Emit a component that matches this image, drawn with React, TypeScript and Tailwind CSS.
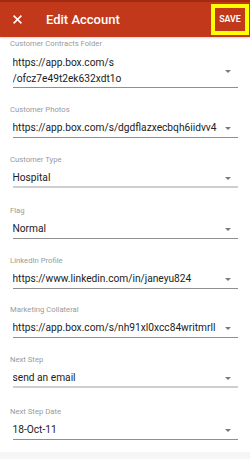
import React from 'react';

type Field = {
  label: string;
  lines: string[];
  soft?: boolean;
  top?: string;
};

const fields: Field[] = [
  { label: 'Customer Photos', lines: ['https://app.box.com/s/dgdflazxecbqh6iidvv4'] },
  { label: 'Customer Type', lines: ['Hospital'], soft: true },
  { label: 'Flag', lines: ['Normal'], top: 'pt-[18px]' },
  { label: 'LinkedIn Profile', lines: ['https://www.linkedin.com/in/janeyu824'] },
  { label: 'Marketing Collateral', lines: ['https://app.box.com/s/nh91xl0xcc84writmrll'], top: 'pt-[16px]' },
  { label: 'Next Step', lines: ['send an email'], soft: true },
  { label: 'Next Step Date', lines: ['18-Oct-11'], top: 'pt-[19px]' },
];

const Caret = () => (
  <svg width="6" height="3" viewBox="0 0 6 3" className="shrink-0">
    <path d="M0 0 L6 0 L3 3 Z" fill="#7a7a7a" />
  </svg>
);

const FormField = ({ field, first }: { field: Field; first?: boolean }) => (
  <div className={first ? 'pt-[2px]' : field.top ?? 'pt-[17px]'}>
    <div className="ml-[10px] h-[10px] text-[7.7px] leading-[10px] text-[#9a9a9a]">{field.label}</div>
    <div className={`ml-[12.5px] w-[225px] ${first ? 'mt-[6px]' : 'mt-[5px]'}`}>
      <div className="flex items-center">
        <div className="flex-1 text-[10.2px] leading-[16px] text-[#212121] whitespace-nowrap overflow-hidden">
          {field.lines.map((l) => (
            <div key={l} className="h-[16px]">{l}</div>
          ))}
        </div>
        <div className="w-[14px] flex justify-center mr-[3px]">
          <Caret />
        </div>
      </div>
      <div className={first ? '' : 'h-[1px]'} />
      <div className={field.soft ? 'h-[2px] -mt-[1px] bg-[#cfcfcf]' : 'h-[1px] bg-[#8f8f8f]'} />
    </div>
  </div>
);

export default function App() {
  return (
    <div
      className="w-[250px] h-[459px] bg-white flex flex-col overflow-hidden"
      style={{ fontFamily: 'Roboto, "Liberation Sans", sans-serif' }}
    >
      {/* Toolbar */}
      <div className="h-[37px] shrink-0 bg-[#c1391a] border-t-2 border-[#a32a12] flex items-start shadow-[0_1px_2px_rgba(0,0,0,0.18)] relative z-10">
        <div className="h-[35px] flex items-center pl-[13px]">
          <svg width="9" height="9" viewBox="0 0 9 9">
            <path d="M0.6 0.6 L8.4 8.4 M8.4 0.6 L0.6 8.4" stroke="#fff" strokeWidth="1.5" />
          </svg>
        </div>
        <div className="h-[35px] flex items-center pl-[24px] text-white text-[13px] font-medium">Edit Account</div>
        <div className="flex-1" />
        <div className="mt-[2px] mr-[1px] w-[38px] h-[31px] border-4 border-[#ffff00] flex items-center justify-center text-white text-[8.8px] font-semibold">
          SAVE
        </div>
      </div>

      {/* Form */}
      <div className="flex-1">
        <FormField
          first
          field={{ label: 'Customer Contracts Folder', lines: ['https://app.box.com/s', '/ofcz7e49t2ek632xdt1o'] }}
        />
        {fields.map((f) => (
          <FormField key={f.label} field={f} />
        ))}
      </div>
      <div className="h-[7px] shrink-0 bg-[#f6f6f6]" />
    </div>
  );
}
